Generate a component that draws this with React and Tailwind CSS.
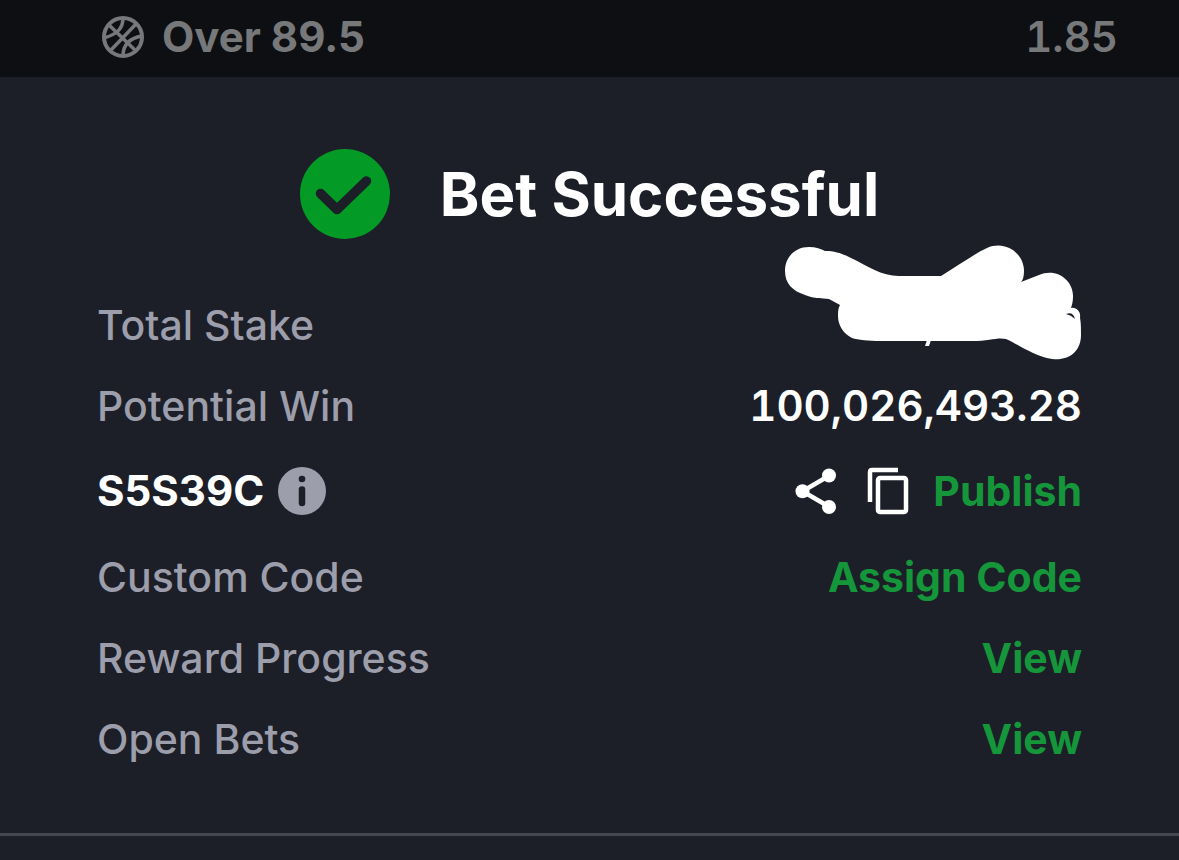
import React from "react";

const BasketballIcon = () => (
  <svg
    viewBox="0 0 42 42"
    fill="none"
    stroke="currentColor"
    strokeWidth="3.500"
    className="size-[42px] shrink-0"
    aria-hidden="true"
  >
    <circle cx="21" cy="21" r="19" strokeWidth="4" />
    <path d="M7 9 L34 35" />
    <path d="M9 34 L34 8" />
    <path d="M21 2 C21 13 15 18 2 22" />
    <path d="M40 20 C28 22 21 28 21 40" />
  </svg>
);

const SuccessIcon = () => (
  <svg viewBox="0 0 90 90" className="size-[90px] shrink-0" aria-hidden="true">
    <circle cx="45" cy="45" r="45" fill="#039b25" />
    <path
      d="M20.500 44.500 L37 60.500 L66.500 32"
      fill="none"
      stroke="#1c1f27"
      strokeWidth="9.500"
      strokeLinecap="round"
      strokeLinejoin="round"
    />
  </svg>
);

const InfoIcon = () => (
  <svg viewBox="0 0 48 48" className="size-12" aria-hidden="true">
    <circle cx="24" cy="24" r="24" fill="#9c9eab" />
    <circle cx="24" cy="12" r="3.300" fill="#1c1f27" />
    <path d="M24 22.500 V36" stroke="#1c1f27" strokeWidth="6.500" strokeLinecap="round" />
  </svg>
);

const ShareIcon = () => (
  <svg viewBox="0 0 42 46" className="h-[46px] w-[42px]" aria-hidden="true">
    <path d="M34.500 7.500 L7.500 23.300 L34.500 39" fill="none" stroke="white" strokeWidth="4.500" />
    <circle cx="34" cy="7.500" r="7" fill="white" />
    <circle cx="7.500" cy="23.300" r="7" fill="white" />
    <circle cx="34" cy="39" r="7" fill="white" />
  </svg>
);

const CopyIcon = () => (
  <svg
    viewBox="0 0 42 48"
    fill="none"
    stroke="white"
    strokeWidth="4.500"
    className="h-12 w-[42px]"
    aria-hidden="true"
  >
    <path d="M31 3 H5 Q3 3 3 5 V35" />
    <rect x="11" y="11" width="28" height="34" rx="2" />
  </svg>
);

const Scribble = () => (
  <svg
    viewBox="0 0 300 118"
    className="absolute right-0 bottom-1 h-[118px] w-[300px]"
    role="img"
    aria-label="Hidden amount"
  >
    <path
      d="M27 4 C34 4 39 6 43 8 C54 8 61 11 69 15 C86 23 99 33 117 33 H159 C177 22 192 11 205 5 C223 -3 242 10 242 28 C242 33 241 37 239 39 L257 32 C275 24 292 38 291 54 C291 58 290 62 289 65 C295 64 299 69 298 75 C299 80 299 84 299 92 C299 109 286 118 270 116 C251 113 236 101 224 96 C215 94 209 98 189 98 H98 C87 98 76 97 70 95 C62 91 56 83 56 73 C56 69 56 65 58 62 L47 56 C40 55 33 56 23 52 C11 48 3 41 3 28 C3 14 13 4 27 4 Z"
      fill="white"
    />
    <path d="M145 97 H149 L147 103 H143 Z" fill="white" />
    <path d="M284 71 Q291 68 293 76 Q289 72 284 71 Z" fill="#1c1f27" />
  </svg>
);

const Row = ({ label, children }) => (
  <div className="flex h-[81px] items-center justify-between">
    <dt className="text-[41px] font-medium text-[#9c9eab]">{label}</dt>
    <dd>{children}</dd>
  </div>
);

const links = [
  { label: "Custom Code", action: "Assign Code" },
  { label: "Reward Progress", action: "View" },
  { label: "Open Bets", action: "View" },
];

const App = () => {
  return (
    <div className="min-h-screen bg-[#1c1f27] font-['Inter',sans-serif] text-[42px] leading-[52px] text-white">
      <header className="flex h-[77px] items-center justify-between bg-[#0e0f13] pr-[61px] pb-1 pl-[102px] font-bold text-[#77787a]">
        <div className="flex items-center gap-[18px]">
          <BasketballIcon />
          <span>Over 89.5</span>
        </div>
        <span className="font-semibold tabular-nums">1.85</span>
      </header>

      <main className="border-b-[3px] border-[#444752] px-[97px] pt-[72px] pb-[54px]">
        <div className="flex items-center justify-center gap-[50px]">
          <SuccessIcon />
          <h1 className="text-[60px] leading-[76px] font-bold">
            Bet Successful
          </h1>
        </div>

        <dl className="pt-[45px]">
          <div className="relative">
            <Row label="Total Stake" />
            <Scribble />
          </div>
          <Row label="Potential Win">
            <span className="font-semibold tabular-nums">100,026,493.28</span>
          </Row>
          <div className="flex h-[90px] items-center justify-between">
            <dt className="flex items-center gap-[14px] font-bold">
              S5S39C
              <button aria-label="Booking code info">
                <InfoIcon />
              </button>
            </dt>
            <dd className="flex items-center">
              <button aria-label="Share" className="mr-[30px]">
                <ShareIcon />
              </button>
              <button aria-label="Copy code" className="mr-6">
                <CopyIcon />
              </button>
              <button className="text-[41px] font-bold text-[#15963a]">
                Publish
              </button>
            </dd>
          </div>
          {links.map((link) => (
            <Row key={link.label} label={link.label}>
              <button className="text-[41px] font-bold text-[#15963a]">
                {link.action}
              </button>
            </Row>
          ))}
        </dl>
      </main>
    </div>
  );
};

export default App;
